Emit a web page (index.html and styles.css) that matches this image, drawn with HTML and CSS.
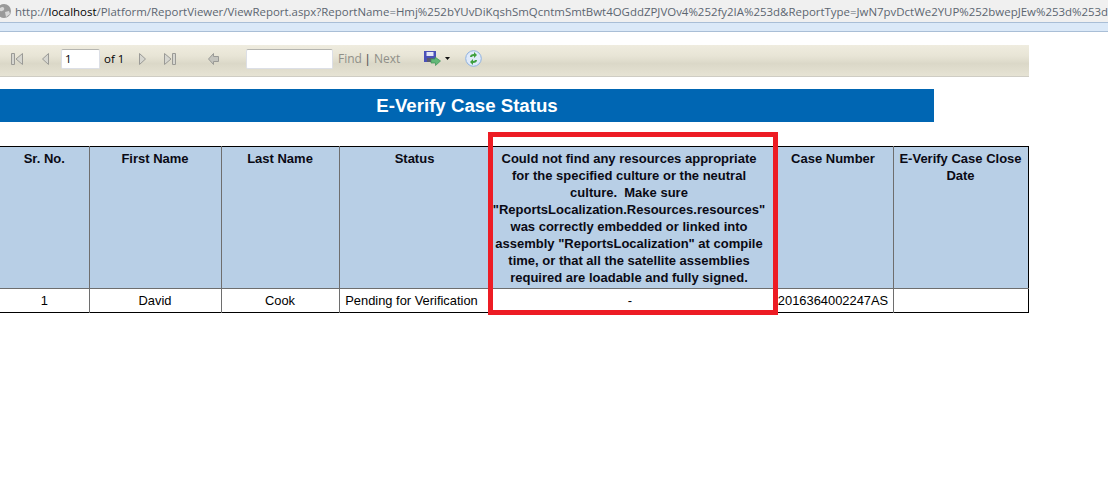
FILE: index.html
```html
<!DOCTYPE html>
<html lang="en">
<head>
<meta charset="utf-8">
<title>E-Verify Case Status</title>
<link rel="stylesheet" href="styles.css">
</head>
<body>
<div class="addressbar">
  <svg class="globe" width="13" height="16" viewBox="0 0 13 16"><circle cx="4" cy="8" r="7" fill="#9a9a9a"/><path d="M0 5q3-2 4 0t-2 3-2-3zM5 9l4-1 1 3-4 3z" fill="#d8d8d8"/></svg>
  <span class="url">http://<b class="host">localhost</b>/Platform/ReportViewer/ViewReport.aspx?ReportName=Hmj%252bYUvDiKqshSmQcntmSmtBwt4OGddZPJVOv4%252fy2IA%253d&amp;ReportType=JwN7pvDctWe2YUP%252bwepJEw%253d%253d</span>
</div>
<div class="infobar"></div>
<div class="toolbar">
  <svg class="tool first" width="12" height="12" viewBox="0 0 12 12"><path d="M.5.5h3v11h-3zM11.500.5v11L5 6z" fill="#d6d6d0" stroke="#9a9a96"/></svg>
  <svg class="tool prev" width="7" height="12" viewBox="0 0 7 12"><path d="M6.500.5v11L.5 6z" fill="#d6d6d0" stroke="#9a9a96"/></svg>
  <div class="field pageinput">1</div>
  <span class="of">of 1</span>
  <svg class="tool next" width="7" height="12" viewBox="0 0 7 12"><path d="M.5.5v11L6.500 6z" fill="#d6d6d0" stroke="#9a9a96"/></svg>
  <svg class="tool last" width="12" height="12" viewBox="0 0 12 12"><path d="M11.500.5h-3v11h3zM.5.5v11L7 6z" fill="#d6d6d0" stroke="#9a9a96"/></svg>
  <svg class="tool back" width="11" height="12" viewBox="0 0 11 12"><path d="M.5 6L5.500.5v3h5v5h-5v3z" fill="#c4c4be" stroke="#9a9a96"/></svg>
  <div class="field findinput"></div>
  <span class="find">Find</span>
  <span class="sep">|</span>
  <span class="find nextlink">Next</span>
  <svg class="tool save" width="17" height="15" viewBox="0 0 17 15"><path d="M0 0h12v11H0z" fill="#4a50b8"/><path d="M2.500 1h7v4h-7z" fill="#e4e6f6"/><path d="M3 7h6v4H3z" fill="#5a5a70"/><path d="M7 8h4V6l5.500 4-5 4.500v-2.500H7z" fill="#62b878" stroke="#3f9058" stroke-width=".7"/></svg>
  <svg class="tool caret" width="5" height="3" viewBox="0 0 5 3"><path d="M0 0h5L2.500 3z" fill="#111"/></svg>
  <svg class="tool refresh" width="17" height="17" viewBox="0 0 17 17"><circle cx="8.500" cy="8.500" r="7.800" fill="#dfeafa" stroke="#8fb2e0"/><path d="M5 7q0-3 4-3V2l3 3-3 3V6q-2 0-2 1z" fill="#3fa03f"/><path d="M12 10q0 3-4 3v2l-3-3 3-3v2q2 0 2-1z" fill="#3fa03f"/></svg>
</div>
<div class="titlebar">E-Verify Case Status</div>
<div class="report">
  <table class="grid">
    <colgroup>
      <col class="c1"><col class="c2"><col class="c3"><col class="c4"><col class="c5"><col class="c6"><col class="c7">
    </colgroup>
    <thead>
      <tr>
        <th>Sr. No.</th>
        <th>First Name</th>
        <th>Last Name</th>
        <th>Status</th>
        <th class="message">Could not find any resources appropriate for the specified culture or the neutral culture.&nbsp; Make sure "ReportsLocalization.Resources.resources" was correctly embedded or linked into assembly "ReportsLocalization" at compile time, or that all the satellite assemblies required are loadable and fully signed.</th>
        <th>Case Number</th>
        <th>E-Verify Case Close Date</th>
      </tr>
    </thead>
    <tbody>
      <tr>
        <td>1</td>
        <td>David</td>
        <td>Cook</td>
        <td class="pending">Pending for Verification</td>
        <td class="dash">-</td>
        <td>2016364002247AS</td>
        <td></td>
      </tr>
    </tbody>
  </table>
  <div class="highlight"></div>
</div>
</body>
</html>
```
FILE: styles.css
```css
html, body {
  margin: 0;
  padding: 0;
  background: #fff;
  overflow: hidden;
}
body {
  width: 1108px;
  height: 496px;
  font-family: "Liberation Sans", Arial, sans-serif;
  color: #000;
}
.addressbar {
  height: 22px;
  background: #f0f0f0;
  border-bottom: 1px solid #a9bed6;
  display: flex;
  align-items: center;
  white-space: nowrap;
  overflow: hidden;
}
.globe { flex: none; margin-right: 2px; }
.url {
  font-family: "Open Sans", sans-serif;
  font-size: 11.45px;
  color: #5c6670;
}
.host { font-weight: 400; color: #000; }
.infobar {
  height: 8px;
  background: #dbe9f8;
  border-bottom: 1px solid #a9bed6;
}
.toolbar {
  margin-top: 13px;
  width: 1029px;
  height: 27px;
  padding-bottom: 4px;
  border-bottom: 1px solid #cfcdc4;
  background: linear-gradient(#efecdf 0%, #e8e5d6 35%, #dbd8c8 60%, #e6e3d4 100%);
  display: flex;
  align-items: center;
  font-size: 12px;
  box-sizing: content-box;
}
.tool { flex: none; }
.first { margin-left: 11px; }
.prev { margin-left: 19px; }
.field {
  box-sizing: border-box;
  height: 20px;
  background: #fff;
  border: 1px solid #dcdfe6;
  border-top-color: #b5b5b0;
  border-radius: 2px;
  flex: none;
}
.pageinput {
  width: 39px;
  margin-left: 12px;
  padding-left: 3px;
  line-height: 18px;
  font-family: "Open Sans", sans-serif;
  font-size: 11.5px;
}
.of {
  margin-left: 4px;
  width: 22px;
  font-family: "Open Sans", sans-serif;
  font-size: 11.5px;
}
.next { margin-left: 13px; }
.last { margin-left: 18px; }
.back { margin-left: 32px; }
.findinput { width: 87px; margin-left: 27px; }
.find {
  font-family: "Open Sans", sans-serif;
  font-size: 12px;
  color: #8f8f88;
  margin-left: 5px;
}
.sep { margin-left: 4px; color: #555; font-size: 12px; }
.nextlink { margin-left: 5px; }
.save { margin-left: 24px; }
.caret { margin-left: 4px; }
.refresh { margin-left: 15px; }
.titlebar {
  margin-top: 12px;
  width: 934px;
  height: 33px;
  line-height: 33px;
  background: #0066b3;
  color: #fff;
  font-size: 18.67px;
  font-weight: 700;
  text-align: center;
}
.report {
  position: relative;
  margin-top: 24px;
}
.grid {
  border-collapse: collapse;
  table-layout: fixed;
  width: 1028px;
  border-top: 1px solid #000;
  border-bottom: 1px solid #000;
  border-right: 1px solid #000;
}
.c1 { width: 89px; }
.c2 { width: 132px; }
.c3 { width: 118px; }
.c4 { width: 151px; }
.c5 { width: 283px; }
.c6 { width: 120px; }
.c7 { width: 135px; }
.grid th, .grid td {
  border-left: 1px solid #6e6e6e;
  text-align: center;
  line-height: 17px;
}
.grid th:first-child, .grid td:first-child { border-left: 0; }
.grid th {
  padding: 3px 2px 2px;
  font-size: 13px;
  background: #b8cfe6;
  vertical-align: top;
  font-weight: 700;
  color: #0a0a14;
  border-bottom: 1px solid #6e6e6e;
}
.grid th.message { padding-left: 1px; padding-right: 6px; }
.grid td {
  padding: 3px 2px;
  font-size: 12.9px;
  height: 17px;
  font-weight: 400;
  white-space: nowrap;
}
.grid td.pending { padding-right: 8px; }
.grid td.dash { padding-right: 5px; }
.highlight {
  position: absolute;
  left: 488px;
  top: -14px;
  width: 280px;
  height: 173px;
  border: 5px solid #ed1c24;
  pointer-events: none;
}
```
